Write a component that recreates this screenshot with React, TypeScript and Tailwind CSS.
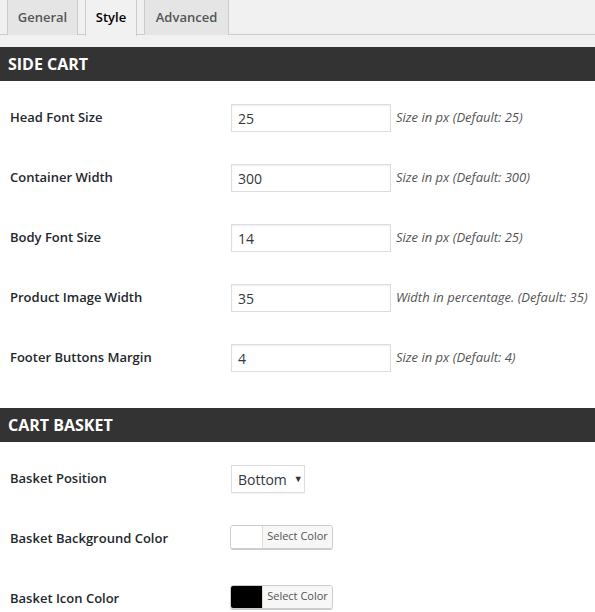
import React from "react";

const font = "font-['Open_Sans','Noto_Sans',sans-serif]";

function Tab({ label, active, w }: { label: string; active?: boolean; w: string }) {
  return (
    <div
      className={
        active
          ? `${w} h-[36px] bg-[#f1f1f1] border-x border-[#ccc] flex items-center justify-center text-[13px] font-semibold text-black relative z-10`
          : `${w} h-[35px] bg-[#e5e5e5] border-x border-[#ccc] flex items-center justify-center text-[13px] font-semibold text-[#555]`
      }
    >
      <span>{label}</span>
    </div>
  );
}

function Header({ title }: { title: string }) {
  return (
    <div className="h-[34px] bg-[#333333] text-white font-bold text-[16px] pl-[8px] flex items-center">
      {title}
    </div>
  );
}

function Row({ label, children }: { label: string; children: React.ReactNode }) {
  return (
    <div className="flex items-center h-[60px]">
      <div className="w-[231px] pl-[10px] text-[13px] font-semibold text-[#23282d]">{label}</div>
      <div className="flex items-center">{children}</div>
    </div>
  );
}

function TextField({ value, hint }: { value: string; hint: string }) {
  return (
    <>
      <input
        readOnly
        value={value}
        className="w-[160px] h-[28px] border border-[#dddddd] px-[6px] text-[14px] text-[#32373c] bg-white shadow-[inset_0_1px_2px_rgba(0,0,0,0.07)] outline-none"
      />
      <span className="ml-[5px] italic text-[13px] text-[#555]">{hint}</span>
    </>
  );
}

function ColorPicker({ color }: { color: string }) {
  return (
    <div className="-ml-px mb-[5px] flex h-[24px] rounded-[3px] border border-[#cccccc] shadow-[0_1px_0_#cccccc] overflow-hidden">
      <div className="w-[31px] h-full" style={{ background: color }} />
      <div className="w-[70px] h-full bg-[#f7f7f7] border-l border-[#dddddd] flex items-center justify-center text-[11px] text-[#555]">
        Select Color
      </div>
    </div>
  );
}

export default function App() {
  return (
    <div className={`w-[595px] min-h-[612px] bg-white ${font}`}>
      <div className="bg-[#f1f1f1] h-[47px]">
        <div className="flex h-[35px] border-b border-[#cccccc] pl-[7px] gap-[7px]">
          <Tab label="General" w="w-[71px]" />
          <Tab label="Style" w="w-[52px]" active />
          <Tab label="Advanced" w="w-[85px]" />
        </div>
      </div>
      <Header title="SIDE CART" />
      <div className="pt-[7px] pb-[20px]">
        <Row label="Head Font Size">
          <TextField value="25" hint="Size in px (Default: 25)" />
        </Row>
        <Row label="Container Width">
          <TextField value="300" hint="Size in px (Default: 300)" />
        </Row>
        <Row label="Body Font Size">
          <TextField value="14" hint="Size in px (Default: 25)" />
        </Row>
        <Row label="Product Image Width">
          <TextField value="35" hint="Width in percentage. (Default: 35)" />
        </Row>
        <Row label="Footer Buttons Margin">
          <TextField value="4" hint="Size in px (Default: 4)" />
        </Row>
      </div>
      <Header title="CART BASKET" />
      <div className="pt-[7px]">
        <Row label="Basket Position">
          <div className="w-[74px] h-[28px] border border-[#dddddd] bg-white flex items-center pl-[6px] text-[14px] text-[#32373c] shadow-[0_1px_1px_rgba(0,0,0,0.04)]">
            <span>Bottom</span>
            <span className="ml-[7px] text-[9px] text-[#333]">▼</span>
          </div>
        </Row>
        <Row label="Basket Background Color">
          <ColorPicker color="#ffffff" />
        </Row>
        <Row label="Basket Icon Color">
          <ColorPicker color="#000000" />
        </Row>
      </div>
    </div>
  );
}
